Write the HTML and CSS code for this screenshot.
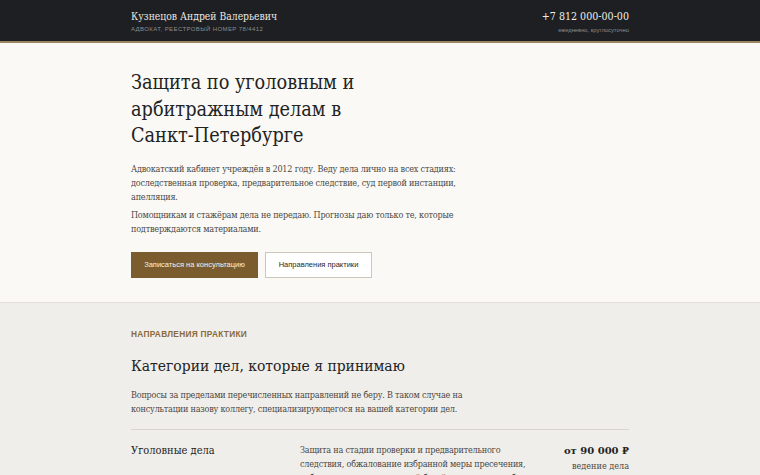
FILE: index.html
```html
<!DOCTYPE html>
<html lang="ru">
<head>
<meta charset="utf-8">
<title>Кузнецов Андрей Валерьевич — адвокат</title>
<link rel="stylesheet" href="styles.css">
</head>
<body>
<header class="topbar">
  <div class="wrap topbar-inner">
    <div class="brand">
      <div class="brand-name">Кузнецов Андрей Валерьевич</div>
      <div class="brand-sub">Адвокат, реестровый номер 78/4412</div>
    </div>
    <div class="contact">
      <div class="contact-phone">+7 812 000-00-00</div>
      <div class="contact-note">ежедневно, круглосуточно</div>
    </div>
  </div>
</header>

<section class="hero">
  <div class="wrap">
    <h1 class="hero-title">Защита по уголовным и<br>арбитражным делам в<br>Санкт-Петербурге</h1>
    <p class="hero-text">Адвокатский кабинет учреждён в 2012 году. Веду дела лично на всех стадиях: доследственная проверка, предварительное следствие, суд первой инстанции, апелляция.</p>
    <p class="hero-text">Помощникам и стажёрам дела не передаю. Прогнозы даю только те, которые подтверждаются материалами.</p>
    <div class="actions">
      <a class="btn btn-primary" href="#">Записаться на консультацию</a>
      <a class="btn btn-outline" href="#">Направления практики</a>
    </div>
  </div>
</section>

<section class="practice">
  <div class="wrap">
    <div class="eyebrow">Направления практики</div>
    <h2 class="section-title">Категории дел, которые я принимаю</h2>
    <p class="section-text">Вопросы за пределами перечисленных направлений не беру. В таком случае на консультации назову коллегу, специализирующегося на вашей категории дел.</p>
    <div class="cases">
      <div class="case">
        <h3 class="case-title">Уголовные дела</h3>
        <p class="case-desc">Защита на стадии проверки и предварительного следствия, обжалование избранной меры пресечения, работа с доказательственной базой, участие в судебных заседаниях.</p>
        <div class="case-price">
          <div class="price">от 90 000 ₽</div>
          <div class="price-note">ведение дела</div>
        </div>
      </div>
    </div>
  </div>
</section>
</body>
</html>
```

FILE: styles.css
```css
* { box-sizing: border-box; }

html, body {
  margin: 0;
  padding: 0;
}

body {
  font-family: "DejaVu Serif Condensed", "DejaVu Serif", serif;
  color: #2b2a28;
  background: #f0eeea;
}

.wrap {
  width: 498px;
  margin: 0 auto;
}

/* Top bar */
.topbar {
  background: #1d1f23;
  border-bottom: 2px solid #9c8562;
}

.topbar-inner {
  height: 41px;
  display: flex;
  justify-content: space-between;
  align-items: center;
}

.brand-name {
  font-size: 10.3px;
  line-height: 14px;
  color: #ece8e0;
}

.brand-sub {
  margin-top: 3px;
  font-family: "Liberation Sans", Arial, sans-serif;
  font-size: 6px;
  letter-spacing: 0.4px;
  text-transform: uppercase;
  color: #8d8c8a;
}

.contact {
  text-align: right;
}

.contact-phone {
  font-size: 10.6px;
  line-height: 15px;
  color: #f1eee8;
}

.contact-note {
  margin-top: 3px;
  font-family: "Liberation Sans", Arial, sans-serif;
  font-size: 5.8px;
  color: #8d8c8a;
}

/* Hero */
.hero {
  background: #faf9f6;
  border-bottom: 1px solid #e2dfd8;
  padding: 27px 0 24px;
}

.hero-title {
  margin: 0;
  font-size: 19.7px;
  line-height: 26.5px;
  font-weight: normal;
  color: #232322;
}

.hero-text {
  max-width: 360px;
  margin: 12px 0 0;
  font-size: 9px;
  letter-spacing: -0.2px;
  line-height: 14px;
  color: #4a4743;
}

.hero-text + .hero-text {
  margin-top: 4px;
}

.actions {
  display: flex;
  gap: 7px;
  margin-top: 16px;
}

.btn {
  display: inline-flex;
  align-items: center;
  justify-content: center;
  height: 26px;
  font-family: "Liberation Sans", Arial, sans-serif;
  font-size: 7.5px;
  text-decoration: none;
}

.btn-primary {
  width: 127px;
  background: #7a5c2e;
  color: #f6f1e6;
}

.btn-outline {
  width: 107px;
  background: #ffffff;
  border: 1px solid #cdc7bb;
  color: #2b2a28;
}

/* Practice section */
.practice {
  padding-top: 26px;
}

.eyebrow {
  font-family: "Liberation Sans", Arial, sans-serif;
  font-size: 8.3px;
  line-height: 10px;
  font-weight: bold;
  letter-spacing: 0.3px;
  text-transform: uppercase;
  color: #8a6a38;
}

.section-title {
  margin: 16px 0 0;
  font-size: 15.5px;
  line-height: 22px;
  font-weight: normal;
  color: #232322;
}

.section-text {
  max-width: 360px;
  margin: 11px 0 0;
  font-size: 9px;
  letter-spacing: -0.2px;
  line-height: 14px;
  color: #4a4743;
}

.cases {
  margin-top: 13px;
  border-top: 1px solid #d9d5cd;
}

.case {
  display: grid;
  grid-template-columns: 169px 1fr auto;
  padding-top: 13px;
}

.case-title {
  margin: 0;
  font-size: 11px;
  line-height: 16px;
  font-weight: normal;
  color: #232322;
}

.case-desc {
  margin: 0;
  max-width: 232px;
  font-size: 9px;
  letter-spacing: -0.2px;
  line-height: 14px;
  color: #4a4743;
}

.case-price {
  text-align: right;
}

.price {
  font-family: "DejaVu Serif", serif;
  font-size: 10px;
  line-height: 16px;
  font-weight: bold;
  color: #232322;
}

.price-note {
  font-size: 9px;
  line-height: 14px;
  color: #4a4743;
}
```
